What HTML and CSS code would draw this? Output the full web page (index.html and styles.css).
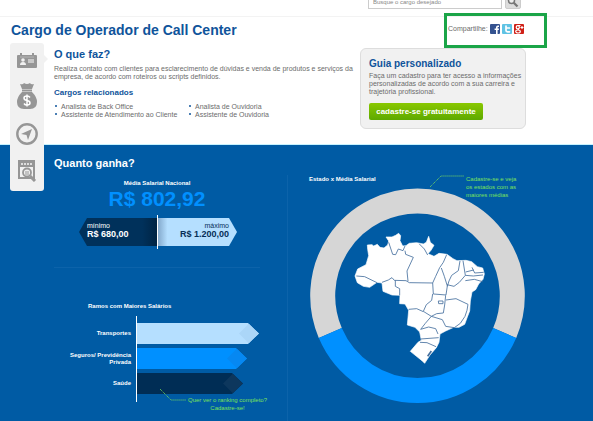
FILE: index.html
```html
<!DOCTYPE html>
<html lang="pt-BR">
<head>
<meta charset="utf-8">
<title>Cargo de Operador de Call Center</title>
<link rel="stylesheet" href="styles.css">
</head>
<body>
<header class="topbar">
  <form class="search">
    <input class="search-input" type="text" aria-label="Busque o cargo desejado" placeholder="Busque o cargo desejado">
    <button class="search-button" type="button" aria-label="Buscar">
      <svg viewBox="0 0 16 16" width="12" height="12"><circle cx="6" cy="6" r="4" fill="#eee" stroke="#777" stroke-width="2"/><path d="M9 9l5 5" stroke="#777" stroke-width="3"/></svg>
    </button>
  </form>
</header>
<main class="page">
  <div class="title-row">
    <h1>Cargo de Operador de Call Center</h1>
    <div class="share">
      <span>Compartilhe:</span>
      <a href="#" aria-label="Facebook"><svg viewBox="0 0 10 10" width="10" height="10"><rect width="10" height="10" rx="1" fill="#34528f"/><path d="M6 10V6H4.600V4.500H6V3.300Q6 1.500 8 1.500H9V3H8.200Q7.600 3 7.600 3.600V4.500H9L8.800 6H7.600V10Z" fill="#fff"/></svg></a>
      <a href="#" aria-label="Twitter"><svg viewBox="0 0 10 10" width="10" height="10"><rect width="10" height="10" rx="1" fill="#5fc3e4"/><path d="M4 2V6.500Q4 7.800 5.500 7.800H7.500M4 4H7.500" fill="none" stroke="#fff" stroke-width="1.700" stroke-linecap="round"/></svg></a>
      <a href="#" aria-label="Google+"><svg viewBox="0 0 10 10" width="10" height="10"><rect width="10" height="10" rx="1" fill="#cf2017"/><circle cx="3.800" cy="3.200" r="1.600" fill="none" stroke="#fff" stroke-width="1.200"/><ellipse cx="4" cy="7.500" rx="2.300" ry="1.500" fill="none" stroke="#fff" stroke-width="1.200"/><path d="M4 1.500H6.500M4.800 4.500L4 6M6.500 3.500H9.500M8 2V5" fill="none" stroke="#fff" stroke-width="1.100"/></svg></a>
    </div>
  </div>

  <nav class="rail" aria-label="Seções">
    <a href="#faz" aria-label="O que faz?"><svg viewBox="0 0 20 16" width="20" height="16"><path fill="#969696" d="M1 3H3V1H5V3H15V1H17V3H19Q20 3 20 4V15Q20 16 19 16H1Q0 16 0 15V4Q0 3 1 3Z"/><circle cx="6" cy="8" r="1.800" fill="#f1f1f1"/><path d="M3 13Q3 10 6 10T9 13Z" fill="#f1f1f1"/><path d="M11 7H17V11H11Z" fill="#c8c8c8"/><path d="M3 5H17" stroke="#b5b5b5"/></svg></a>
    <a href="#ganha" aria-label="Quanto ganha?"><svg viewBox="0 0 20 26" width="20" height="26"><path fill="#969696" d="M3 1Q6 2 7 0Q10 2 13 0Q14 2 17 1L15 6H5Z"/><path d="M5 7.500H15" stroke="#969696" stroke-width="2"/><path fill="#969696" d="M5 9H15Q20 14 20 19Q20 26 13 26H7Q0 26 0 19Q0 14 5 9Z"/><path d="M13 14.500Q12 13 10 13Q7 13 7 15Q7 17 10 17.500Q13 18 13 20Q13 22 10 22Q8 22 7 20.500M10 11.500V23.500" fill="none" stroke="#fff" stroke-width="1.500"/></svg></a>
    <a href="#carreira" aria-label="Carreira"><svg viewBox="0 0 22 22" width="22" height="22"><circle cx="11" cy="11" r="9.700" fill="none" stroke="#969696" stroke-width="2.400"/><path d="M16 6L12 17L10.500 12L5 11Z" fill="#969696"/></svg></a>
    <a href="#vagas" aria-label="Vagas"><svg viewBox="0 0 20 22" width="20" height="22"><path d="M2 1H17V18H2Z" fill="#f1f1f1" stroke="#969696" stroke-width="2"/><path d="M2 4H17" stroke="#969696" stroke-width="6"/><path d="M4 4H16" stroke="#ddd" stroke-width="2" stroke-dasharray="2 1"/><circle cx="10" cy="12.500" r="4" fill="#eee" stroke="#969696" stroke-width="1.800"/><path d="M8 12H12M8 14H12" stroke="#969696"/><path d="M13 16L18 21" stroke="#969696" stroke-width="3"/></svg></a>
  </nav>

  <section class="about" id="faz">
    <div class="about-text">
      <h2>O que faz?</h2>
      <p>Realiza contato com clientes para esclarecimento de dúvidas e venda de produtos e serviços da empresa, de acordo com roteiros ou scripts definidos.</p>
      <h3>Cargos relacionados</h3>
      <ul class="related">
        <li>Analista de Back Office</li>
        <li>Analista de Ouvidoria</li>
        <li>Assistente de Atendimento ao Cliente</li>
        <li>Assistente de Ouvidoria</li>
      </ul>
    </div>
    <aside class="guide">
      <h2>Guia personalizado</h2>
      <p>Faça um cadastro para ter acesso a informações personalizadas de acordo com a sua carreira e trajetória profissional.</p>
      <button class="cta" type="button">cadastre-se gratuitamente</button>
    </aside>
  </section>

  <section class="salary" id="ganha">
    <div class="salary-left">
      <h2>Quanto ganha?</h2>
      <div class="average">
        <h4>Média Salarial Nacional</h4>
        <strong class="amount">R$ 802,92</strong>
        <div class="range">
          <div class="min"><small>mínimo</small><b>R$ 680,00</b></div>
          <div class="max"><small>máximo</small><b>R$ 1.200,00</b></div>
        </div>
      </div>
      <div class="ranking">
        <h4>Ramos com Maiores Salários</h4>
        <div class="chart">
          <div class="labels"><span>Transportes</span><span>Seguros/ Previdência Privada</span><span>Saúde</span></div>
          <div class="bars">
            <div class="bar light" style="width:122px"></div>
            <div class="bar bright" style="width:110px"></div>
            <div class="bar dark" style="width:106px"></div>
          </div>
        </div>
        <a class="ranking-note" href="#"><svg viewBox="0 0 28 14" width="28" height="14"><path d="M1 1L12 12H27" fill="none" stroke="#7ce05a" stroke-dasharray="1 1"/></svg><span>Quer ver o ranking completo?<br>Cadastre-se!</span></a>
      </div>
    </div>
    <div class="salary-right">
      <div class="map-head">
        <h4>Estado x Média Salarial</h4>
        <a class="map-note" href="#"><svg viewBox="0 0 36 13" width="36" height="13"><path d="M1 12L12 1H35" fill="none" stroke="#7ce05a" stroke-dasharray="1 1"/></svg><span>Cadastre-se e veja os estados com as maiores médias</span></a>
      </div>
      <svg class="donut" viewBox="310 188 216 216" width="216" height="216" role="img" aria-label="Mapa do Brasil">
        <path d="M330.300 333A94.800 94.800 0 1 1 504.700 333" fill="none" stroke="#d6d6d6" stroke-width="25"/>
        <path d="M330.300 333A94.800 94.800 0 0 0 504.700 333" fill="none" stroke="#0090ff" stroke-width="25"/>
        <g transform="translate(300 165) scale(.33333)">
          <path fill="#fff" stroke="#fff" stroke-width="2" stroke-linejoin="round" d="M202 240L216 239L221 243L232 238L240 247L252 249L263 240L266 228L258 216L276 216L287 211L296 205L302 212L300 227L308 243L318 242L328 235L350 233L370 237L379 232L386 214L391 232L402 241L393 256L384 266L402 274L417 265L441 268L459 281L471 287L498 286L515 290L532 305L548 309L553 327L549 343L536 357L527 374L516 381L511 408L509 438L502 456L494 478L477 487L461 487L437 498L420 507L417 532L409 548L390 570L374 595L366 587L331 559L354 532L364 526L359 501L345 487L322 480L326 436L315 417L299 416L300 391L276 390L249 379L246 354L231 352L209 367L190 364L172 353L165 333L173 312L198 299L206 272L203 253Z"/>
          <g fill="none" stroke="#456f9d" stroke-width="2.500" stroke-linejoin="round">
            <path d="M266 232L278 268L287 269L295 252L309 257L315 243M315 257L317 268L340 277L321 318L324 348M358 237L373 252L383 270M169 333L194 335L231 353M246 352L265 345L276 338L283 346L318 347L328 353L398 354M286 346V364L299 371V391M398 354L407 334L419 308L430 292L440 269M398 354L400 387L438 390L442 363L433 334L424 309M398 387L395 406L379 419L370 439L394 454L410 446L430 444L434 420L437 391M326 433L350 431L370 440M442 364L447 348L455 331L475 317L480 288M489 287L496 331L478 352L462 364L441 359M438 405L468 401L504 418L501 436L495 454L481 475L463 488L437 484L427 464L394 454M394 454L376 475L362 493L386 486L407 491L414 507M362 522L416 518M360 532L381 533L408 545M496 331L520 333L549 330M496 347L523 343L548 350M516 307L524 324L551 322M497 321L521 315M415 408H429V416H416Z"/>
            <path d="M394 558L383 574" stroke-width="5"/>
          </g>
        </g>
      </svg>
    </div>
  </section>
</main>
</body>
</html>
```
FILE: styles.css
```css
* { box-sizing: border-box; }
body { margin: 0; background: #fff; color: #6b6b6b; font: 7px/8px "Liberation Sans", Arial, sans-serif; }
h1, h2, h3, h4, p, ul { margin: 0; padding: 0; }
h1, h2, h3 { color: #0f549b; }
a { text-decoration: none; }
svg { display: block; }

.topbar { height: 17px; display: flex; align-items: flex-end; border-bottom: 1px solid #f3f3f3; }
.search { display: flex; gap: 3px; margin-left: 368px; padding-bottom: 7px; }
.search-input { width: 134px; height: 15px; padding: 0 4px; border: 1px solid #ccc; font: 6px "Liberation Sans", Arial, sans-serif; }
.search-input::placeholder { color: #888; }
.search-button { width: 16px; height: 15px; padding: 1px; border: 1px solid #ccc; border-radius: 2px; background: #ddd; }

.page { position: relative; }
.title-row { display: flex; height: 31px; padding-left: 11px; }
h1 { width: 433px; font-size: 14px; line-height: 27px; }
.share { display: flex; align-items: center; gap: 2px; width: 103px; height: 35px; margin-top: -4px; padding: 0 0 3px 1px; border: 3px solid #1ba548; }

.rail { position: absolute; top: 26px; left: 10px; width: 34px; height: 148px; padding: 9px 0; display: flex; flex-direction: column; align-items: center; justify-content: space-between; border-radius: 3px; background: #f1f1f1; }
.rail::after { content: ""; position: absolute; left: 34px; top: 12px; border: 4px solid transparent; border-left-color: #f1f1f1; border-right: 0; }

.about { display: grid; grid-template-columns: 306px 166px; height: 97px; padding-left: 54px; border-bottom: 1px solid #c5f2ff; }
.about-text { padding-right: 4px; }
h2 { font-size: 11px; line-height: 12px; }
.about p { margin-top: 5px; }
h3 { margin-top: 7px; font-size: 8px; line-height: 10px; }
.related { display: grid; grid-template-columns: 134px 1fr; margin-top: 5px; list-style: none; }
.related li::before { content: ""; display: inline-block; width: 2px; height: 2px; margin: 0 4px 2px 1px; border-radius: 1px; background: #0f549b; }
.guide { height: 81px; padding: 9px 0 0 8px; border: 1px solid #ddd; border-radius: 6px; background: #f1f1f1; }
.guide h2 { font-size: 10px; }
.guide p { margin-top: 2px; }
.cta { width: 114px; height: 17px; margin-top: 7px; padding: 0; border: 0; border-radius: 2px; background: linear-gradient(#89c800, #5ea900); color: #fff; font: bold 8px "Liberation Sans", Arial, sans-serif; }

.salary { display: grid; grid-template-columns: 234px 1fr; min-height: 276px; padding-left: 54px; background: #005ba4; color: #fff; }
.salary h2 { color: #fff; }
h4 { font-size: 6px; line-height: 8px; }
.salary-left { padding-top: 12px; background: linear-gradient(#0c63aa, #0c63aa) right 30px / 1px 100% no-repeat; }
.average { width: 206px; height: 99px; padding-top: 10px; border-bottom: 1px solid #0c63aa; text-align: center; }
.amount { display: block; color: #0090ff; font-size: 21px; line-height: 24px; }
.range { display: grid; grid-template-columns: 1fr 1fr; width: 158px; height: 34px; margin: 4px auto 0 25px; padding: 3px 0; position: relative; }
.range::after { content: ""; position: absolute; left: 78px; top: 0; width: 1px; height: 34px; background: #fff; }
.range div { display: flex; flex-direction: column; padding: 4px 8px 0; }
.range small { font-size: 7px; line-height: 7px; }
.range b { font-size: 9px; line-height: 10px; }
.min { background: linear-gradient(90deg, #00315b 80%, #002342); clip-path: polygon(0 50%, 8px 0, 100% 0, 100% 100%, 8px 100%); text-align: left; }
.max { background: linear-gradient(90deg, #83a9cc, #b5dfff 12%); clip-path: polygon(0 0, 71px 0, 100% 50%, 71px 100%, 0 100%); color: #062e57; text-align: right; }
.ranking { padding-top: 34px; }
.ranking h4 { margin-left: 34px; }
.chart { display: grid; grid-template-columns: 82px 1fr; margin-top: 6px; }
.labels { display: grid; grid-template-rows: repeat(3, 25px); align-items: center; padding: 5px 5px 0 0; font-size: 6px; font-weight: bold; line-height: 7px; text-align: right; }
.bars { display: flex; flex-direction: column; gap: 4px; height: 86px; padding-top: 7px; border-left: 1px solid #fff; }
.bar { display: flex; align-items: center; justify-content: flex-end; height: 21px; clip-path: polygon(0 0, calc(100% - 11px) 0, 100% 50%, calc(100% - 11px) 100%, 0 100%); }
.bar::after { content: ""; width: 20px; height: 20px; clip-path: polygon(50% 0, 100% 50%, 50% 100%, 0 50%); }
.light { background: #b5dfff; }
.light::after { background: #abd6f8; }
.bright { background: #0090ff; }
.bright::after { background: #0688f2; }
.dark { background: #002d55; }
.dark::after { background: #0d375d; }
.ranking-note { display: flex; gap: 1px; margin: -14px 0 0 105px; position: relative; color: #7ce05a; font-size: 6px; text-align: center; }
.ranking-note span { padding-top: 8px; white-space: nowrap; }

.map-head { display: flex; height: 43px; padding: 30px 0 0 21px; }
.map-head h4 { width: 120px; }
.map-note { display: flex; gap: 1px; color: #7ce05a; }
.map-note span { width: 54px; font-size: 6px; }
.donut { margin-left: 22px; }
```
